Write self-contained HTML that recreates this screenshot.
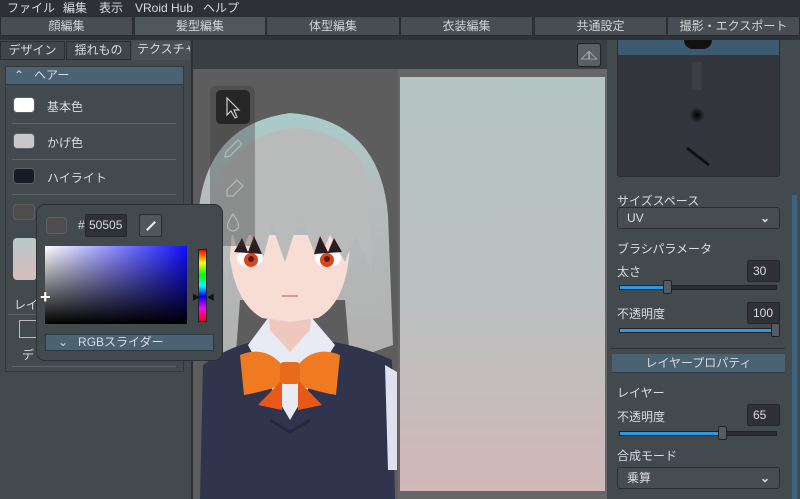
<!DOCTYPE html>
<html><head><meta charset="utf-8"><style>
*{box-sizing:border-box;margin:0;padding:0}
body{width:800px;height:499px;overflow:hidden;background:#2f3337;font-family:"Liberation Sans","Noto Sans CJK JP",sans-serif;color:#d8dcde;font-size:12px;position:relative}
.a{position:absolute}
.m{position:absolute;top:0;line-height:16px;font-size:12px;color:#d8dcde}
.tab{position:absolute;top:16px;height:20px;background:#474d52;border:1px solid #2a2e31;text-align:center;line-height:18px;font-size:12px;color:#d0d4d6}
.sw{position:absolute;left:13px;width:22px;height:16px;border-radius:4px;border:1px solid #5a6064}
.lbl{position:absolute;left:47px;font-size:12px}
.hr{position:absolute;left:12px;width:164px;height:1px;background:#5d6468}
.inp{position:absolute;background:#2e3236;border:1px solid #25282b;border-radius:2px;font-size:12px;line-height:20px;padding-left:5px;color:#d8dcde}
.trk{position:absolute;height:5px;background:#2a2d30;border:1px solid #222}
.fill{position:absolute;height:3px;background:#2f9ae0;top:0;left:0}
.knob{position:absolute;width:9px;height:14px;background:#555b60;border:1px solid #222;border-radius:2px}
.drop{position:absolute;left:617px;width:163px;height:22px;background:#474d52;border:1px solid #2a2e31;border-radius:3px;font-size:12px;line-height:20px;padding-left:9px}
</style></head><body>
<div class="a" style="left:0;top:0;width:800px;height:16px;background:#2d3135"></div>
<div class="m" style="left:7px">ファイル</div>
<div class="m" style="left:63px">編集</div>
<div class="m" style="left:99px">表示</div>
<div class="m" style="left:135px">VRoid Hub</div>
<div class="m" style="left:203px">ヘルプ</div>
<div class="tab" style="left:0;width:133px">顔編集</div>
<div class="tab" style="left:134px;width:132px;background:#50575c">髪型編集</div>
<div class="tab" style="left:266px;width:134px">体型編集</div>
<div class="tab" style="left:400px;width:133px">衣装編集</div>
<div class="tab" style="left:534px;width:133px">共通設定</div>
<div class="tab" style="left:667px;width:133px">撮影・エクスポート</div>

<div class="a" style="left:0;top:40px;width:191px;height:459px;background:#434a4e"></div>
<div class="a" style="left:0;top:41px;width:65px;height:19px;background:#3f4549;border:1px solid #2a2e31;text-align:center;line-height:17px">デザイン</div>
<div class="a" style="left:66px;top:41px;width:65px;height:19px;background:#3f4549;border:1px solid #2a2e31;text-align:center;line-height:17px">揺れもの</div>
<div class="a" style="left:132px;top:41px;width:58px;height:19px;background:#4a5156;line-height:17px;padding-left:5px;overflow:hidden;white-space:nowrap">テクスチャ</div>
<div class="a" style="left:5px;top:66px;width:179px;height:306px;border:1px solid #33383b"></div>
<div class="a" style="left:6px;top:67px;width:177px;height:18px;background:#4b6272;border-bottom:1px solid #2b3a44;line-height:17px;padding-left:8px;font-size:12px">⌃&nbsp;&nbsp; ヘアー</div>
<div class="sw" style="top:97px;background:#fff"></div><div class="lbl" style="top:98px">基本色</div>
<div class="hr" style="top:123px"></div>
<div class="sw" style="top:133px;background:#c8c8c8"></div><div class="lbl" style="top:134px">かげ色</div>
<div class="hr" style="top:159px"></div>
<div class="sw" style="top:168px;background:#141e24"></div><div class="lbl" style="top:169px">ハイライト</div>
<div class="hr" style="top:194px"></div>
<div class="sw" style="top:204px;background:#4e4c4c"></div>
<div class="a" style="left:13px;top:238px;width:24px;height:42px;border-radius:4px;background:linear-gradient(#b8c8c8,#d8bcbc)"></div>
<div class="lbl" style="left:14px;top:296px">レイ</div>
<div class="hr" style="left:8px;top:314px"></div>
<div class="a" style="left:19px;top:320px;width:18px;height:18px;border:1px solid #bbb"></div>
<div class="lbl" style="left:22px;top:346px">デ</div>
<div class="hr" style="top:366px"></div>
<div class="a" style="left:191px;top:40px;width:2px;height:459px;background:#2c3033"></div>

<div class="a" style="left:193px;top:40px;width:414px;height:29px;background:#3a3f43"></div>
<div class="a" style="left:577px;top:43px;width:24px;height:24px;background:#5a5f63;border:1px solid #222;border-radius:3px;color:#bbb;text-align:center;line-height:22px;font-size:11px">◿◺</div>
<div class="a" style="left:193px;top:69px;width:205px;height:430px;background:#5d5d5d"></div>
<div class="a" style="left:398px;top:69px;width:209px;height:430px;background:#666"></div>
<div class="a" style="left:400px;top:77px;width:205px;height:414px;background:linear-gradient(#b5c5c4,#bcc1c1 55%,#d2b8b8)"></div>

<svg class="a" style="left:193px;top:69px" width="205" height="430" viewBox="193 69 205 430">
 <defs><linearGradient id="h" x1="0" y1="0" x2="0" y2="1"><stop offset="0" stop-color="#a9cccc"/><stop offset="0.3" stop-color="#b6bcbc"/><stop offset="1" stop-color="#b2b0b0"/></linearGradient></defs>
 <path d="M200 355 L198 220 Q203 125 290 113 Q380 120 388 215 L393 345 L350 360 L345 300 L240 300 L235 365 Z" fill="url(#h)"/>
 <path d="M200 499 L203 365 Q230 345 262 340 L320 340 Q360 345 392 360 L395 499 Z" fill="#30344c"/>
 <path d="M385 365 L397 372 L397 470 L388 470 Z" fill="#dfe2ee"/>
 <path d="M248 345 L268 318 L312 318 L335 345 L318 372 L290 420 L262 372 Z" fill="#e8ebf4"/>
 <path d="M268 310 L312 310 L310 330 L290 352 L270 330 Z" fill="#efc8bd"/>
 <path d="M228 235 Q230 300 262 318 L290 322 L318 318 Q350 300 350 235 Z" fill="#f7ddd4"/>
 <path d="M222 170 Q255 128 300 128 Q350 133 368 175 L372 270 L355 235 L345 262 L330 235 L318 262 L300 215 L285 262 L272 225 L262 262 L250 232 L240 258 L232 232 L228 280 L220 260 Z" fill="#b9baba"/>
 <ellipse cx="250" cy="258" rx="13" ry="9" fill="#fff"/><circle cx="251" cy="260" r="7" fill="#d8461b"/><circle cx="251" cy="259" r="3" fill="#5a1a10"/>
 <ellipse cx="328" cy="258" rx="13" ry="9" fill="#fff"/><circle cx="327" cy="260" r="7" fill="#d8461b"/><circle cx="327" cy="259" r="3" fill="#5a1a10"/>
 <path d="M234 252 L242 238 L248 252 L254 236 L262 254 Z" fill="#2a1c22"/>
 <path d="M314 254 L320 236 L328 252 L334 238 L342 252 Z" fill="#2a1c22"/>
 <path d="M282 296 L298 296" stroke="#d9988a" stroke-width="2"/>
 <path d="M240 355 Q265 345 282 365 L282 385 Q262 392 244 395 Z" fill="#f07a22"/>
 <path d="M340 355 Q315 345 298 365 L298 385 Q318 392 336 395 Z" fill="#f07a22"/>
 <path d="M282 380 L258 405 L282 410 Z M298 380 L322 405 L298 410 Z" fill="#e8581a"/>
 <rect x="280" y="362" width="20" height="22" rx="4" fill="#e86a1c"/>
 <path d="M270 420 L290 432 L310 420" stroke="#24283c" stroke-width="3" fill="none"/>
 <rect x="210" y="86" width="45" height="160" rx="6" fill="#3a3a3a" fill-opacity="0.35"/>
 <rect x="216" y="90" width="34" height="34" rx="5" fill="#262626"/>
 <path d="M227 98 L227 115 L231 111 L235 118 L237 117 L234 110 L239 110 Z" fill="none" stroke="#ccc" stroke-width="1.2"/>
 <path d="M226 152 L238 140 L242 144 L230 156 L225 157 Z" fill="none" stroke="#ccc" stroke-width="1.2" opacity="0.7"/>
 <path d="M227 190 L237 180 L243 186 L233 196 L227 196 Z" fill="none" stroke="#ccc" stroke-width="1.2" opacity="0.7"/>
 <path d="M233 214 Q226 224 228 228 Q233 234 238 228 Q240 224 233 214 Z" fill="none" stroke="#ccc" stroke-width="1.2" opacity="0.7"/>
</svg>

<div class="a" style="left:607px;top:40px;width:193px;height:459px;background:#434a4e"></div>
<div class="a" style="left:617px;top:40px;width:163px;height:137px;background:#33373c;border:1px solid #2a2d30;border-radius:0 0 3px 3px"></div>
<div class="a" style="left:618px;top:40px;width:161px;height:15px;background:#3c5a70"></div>
<div class="a" style="left:684px;top:40px;width:28px;height:9px;border-radius:0 0 14px 14px;background:#111"></div>
<div class="a" style="left:692px;top:62px;width:10px;height:28px;background:#3d3f42"></div>
<div class="a" style="left:689px;top:107px;width:16px;height:16px;border-radius:50%;background:radial-gradient(#000,rgba(0,0,0,0) 70%)"></div>
<div class="a" style="left:684px;top:155px;width:28px;height:3px;background:#111;transform:rotate(38deg)"></div>
<div class="a" style="left:792px;top:195px;width:5px;height:304px;background:#3d6480"></div>
<div class="a" style="left:617px;top:192px">サイズスペース</div>
<div class="drop" style="top:207px">UV<span style="position:absolute;right:9px;font-weight:bold">⌄</span></div>
<div class="a" style="left:617px;top:240px">ブラシパラメータ</div>
<div class="a" style="left:617px;top:263px">太さ</div>
<div class="inp" style="left:747px;top:260px;width:33px;height:22px">30</div>
<div class="trk" style="left:619px;top:285px;width:158px"><div class="fill" style="width:48px"></div></div>
<div class="knob" style="left:663px;top:280px"></div>
<div class="a" style="left:617px;top:305px">不透明度</div>
<div class="inp" style="left:747px;top:302px;width:33px;height:22px">100</div>
<div class="trk" style="left:619px;top:328px;width:158px"><div class="fill" style="width:156px"></div></div>
<div class="knob" style="left:771px;top:323px"></div>
<div class="a" style="left:611px;top:348px;width:174px;height:1px;background:#2f3336"></div>
<div class="a" style="left:612px;top:354px;width:173px;height:19px;background:#4b6272;border-bottom:1px solid #2b3a44;text-align:center;line-height:18px">レイヤープロパティ</div>
<div class="a" style="left:617px;top:384px">レイヤー</div>
<div class="a" style="left:617px;top:408px">不透明度</div>
<div class="inp" style="left:747px;top:404px;width:33px;height:22px">65</div>
<div class="trk" style="left:619px;top:431px;width:158px"><div class="fill" style="width:102px"></div></div>
<div class="knob" style="left:718px;top:426px"></div>
<div class="a" style="left:617px;top:447px">合成モード</div>
<div class="drop" style="top:467px">乗算<span style="position:absolute;right:9px;font-weight:bold">⌄</span></div>

<div class="a" style="left:36px;top:204px;width:187px;height:157px;background:#434a4e;border:1px solid #2c3033;border-radius:9px"></div>
<div class="a" style="left:46px;top:217px;width:21px;height:17px;border-radius:4px;background:#4e4c4c;border:1px solid #5c6165"></div>
<div class="a" style="left:78px;top:218px;font-size:12px">#</div>
<div class="inp" style="left:85px;top:214px;width:42px;height:23px;padding-left:3px">50505</div>
<div class="a" style="left:139px;top:214px;width:23px;height:23px;background:#50575c;border:1px solid #2a2e31;border-radius:2px"></div>
<div class="a" style="left:145px;top:225px;width:12px;height:2px;background:#eee;transform:rotate(-45deg)"></div>
<div class="a" style="left:45px;top:246px;width:142px;height:78px;background:linear-gradient(to bottom,rgba(0,0,0,0),#000),linear-gradient(to right,#fff,#1010ff)"></div>
<div class="a" style="left:40px;top:290px;color:#fff;font-size:18px;line-height:14px;font-weight:bold">+</div>
<div class="a" style="left:198px;top:249px;width:9px;height:73px;border:1px solid #222;background:linear-gradient(#f00,#ff0 18%,#0f0 35%,#0ff 50%,#00f 65%,#f0f 82%,#f00)"></div>
<div class="a" style="left:192px;top:292px;font-size:8px;color:#111">▶&nbsp;&nbsp;&nbsp;◀</div>
<div class="a" style="left:45px;top:334px;width:169px;height:17px;background:#4b6272;border:1px solid #2a3a44;line-height:15px;padding-left:12px;font-size:12px">⌄&nbsp;&nbsp; RGBスライダー</div>
</body></html>
